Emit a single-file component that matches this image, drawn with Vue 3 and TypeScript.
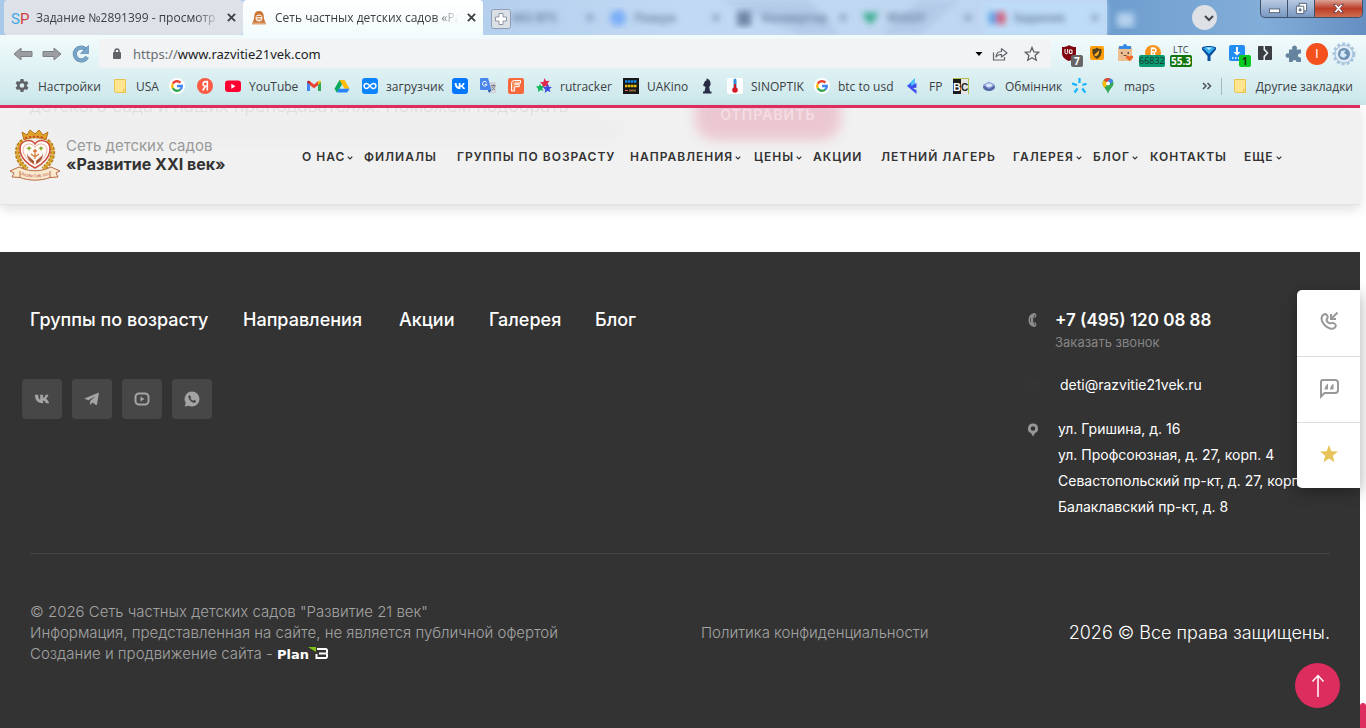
<script setup lang="ts">
interface Item { icon: string; label?: string; title?: string }
interface NavItem { label: string; sub?: boolean }

const google = '<circle cx="8" cy="8" r="8" fill="#fff"/><g fill="none" stroke-width="2.4"><path d="M11.4 4.6A4.8 4.8 0 0 0 3.8 5.7" stroke="#ea4335"/><path d="M3.8 5.7A4.8 4.8 0 0 0 3.8 10.3" stroke="#fbbc05"/><path d="M3.8 10.3A4.8 4.8 0 0 0 11.3 11.5" stroke="#34a853"/><path d="M11.3 11.5A4.7 4.7 0 0 0 12.8 8H8" stroke="#4285f4"/></g>'
const folder = '<path d="M2.5 1.5h11v13h-9a2 2 0 0 1-2-2z" fill="#ffe58f" stroke="#e9c34c"/><path d="M11.5 14.5v-3h2" fill="none" stroke="#e9c34c"/>'

const icons: Record<string, string> = {
  gear: '<path fill="#5f6368" d="M6.600 1h2.800l.4 2 1.300.7 1.900-.7 1.400 2.400-1.500 1.300v1.500l1.500 1.300-1.400 2.400-1.900-.7-1.300.8-.4 2H6.600l-.4-2-1.300-.8-1.900.7-1.400-2.400 1.500-1.300V6.700L1.600 5.400 3 3l1.900.7L6.200 3z"/><circle cx="8" cy="7.500" r="2.300" fill="#d8edf0"/>',
  folder,
  google,
  yandex: '<circle cx="8" cy="8" r="8" fill="#fc5b45"/><path d="M10.300 12.500V3.600H8.700c-3.300 0-3.600 4.500-.2 4.700h1.800M8.400 8.300l-2.700 4.200" fill="none" stroke="#fff" stroke-width="1.600"/>',
  youtube: '<rect y="2.500" width="16" height="11.500" rx="3" fill="#ff0033"/><path d="M6.300 5.700v5l4.200-2.500z" fill="#fff"/>',
  gmail: '<path d="M1 3.500V13h3V6.500" fill="#4285f4"/><path d="M12 6.500V13h3V3.500" fill="#34a853"/><path d="M1 4.200 4 6.800V3.300C2.500 2 1 3 1 4.200z" fill="#c5221f"/><path d="M4 3.300 8 6.400l4-3.100v3.900l-4 3-4-3z" fill="#ea4335"/><path d="M12 3.300c1.500-1.300 3-.3 3 .9l-3 2.600z" fill="#fbbc04"/>',
  drive: '<path d="M5.500 2h5L5 11.400 2.700 14.500.5 10.700z" fill="#0da960"/><path d="M5.500 2h5l5 8.700h-5z" fill="#ffba00"/><path d="M5 10.700h10.500l-2.200 3.800H2.700z" fill="#2684fc"/>',
  loop: '<rect width="16" height="16" rx="3" fill="#0a84ff"/><path d="M8 8C6.500 6 5.600 5.500 4.600 5.500a2.500 2.500 0 0 0 0 5C6.500 10.500 9 5.500 11.400 5.500a2.500 2.500 0 0 1 0 5C10.400 10.500 9.500 10 8 8z" fill="none" stroke="#fff" stroke-width="1.500"/>',
  vk: '<rect width="16" height="16" rx="3" fill="#07f"/><path d="M2.600 5h1.900c.1 2.600 1.300 3.700 2.200 3.900V5h1.800v2.400c1-.1 2-1.100 2.400-2.400h1.800c-.3 1.500-1.400 2.500-2.200 3 .8.400 2.100 1.300 2.600 3h-2c-.4-1.200-1.300-2-2.600-2.200V11h-.3C4.700 11 2.700 9 2.600 5z" fill="#fff"/>',
  translate: '<path d="M6 4h10v11H9z" fill="#d3d5d8"/><path d="M1 0h7l3.500 12H1a1 1 0 0 1-1-1V1a1 1 0 0 1 1-1z" fill="#4b86ed"/><path d="M8 12h3.500L9 15z" fill="#2453b3"/><path d="M6.700 4.500A2.300 2.300 0 1 0 7 6.400H4.800" fill="none" stroke="#fff"/><path d="M11 7.500h4.500M13.400 6.500v1M14.600 8c-.5 2-1.300 3-2.600 4M12 8.500c.6 1.500 1.500 2.500 2.800 3.200" fill="none" stroke="#70757c" stroke-width=".9"/>',
  ef: '<rect width="16" height="16" rx="2" fill="#f5693c"/><path d="M3.500 13V5.500c0-2 1-3 3-3h6v2.700H7.500c-.6 0-.9.300-.9 1h4.600v2.500H6.600V13z" fill="#ff8d5e" stroke="#fff"/>',
  rut: '<path d="M8.500 0 10 3l3.500-.3L11.600 5.600 13 9 9.400 8 6.500 10 6.400 6.400 4 4h3.400z" fill="#e0284f"/><path d="M4 5.500 5 8l3-.2-1.800 2.400L7.500 13 4.600 12 2 14l.1-3.300L0 8.500l3-.4z" fill="#12b95c"/><path d="M12 6l.8 2.700 3.200.3-2.500 2 1 3.300-2.800-1.500L8.700 15l.6-3.300L7 9.300l3.300-.5z" fill="#3d4ee0"/>',
  ua: '<rect width="16" height="16" fill="#171717"/><path d="M2 3.500h12" stroke="#1688e8" stroke-width="2.500" stroke-dasharray="2.500 .5"/><path d="M2 8h12" stroke="#e7bd12" stroke-width="2.500" stroke-dasharray="2.500 .5"/><path d="M2 12.500h3" stroke="#f66"/><path d="M6 12.500h7" stroke="#8b6333" stroke-width="2"/>',
  knight: '<path d="M4 15.500v-2h1.500L6.500 9 4 7.500 6 3l1.500-.5V.5C10.500 1 12 4 11.500 7l-1.300 2 .8 4.500h1.500v2z" fill="#292c45"/>',
  thermo: '<rect width="16" height="16" rx="2" fill="#fff"/><path d="M6.500 2a1.500 1.500 0 0 1 3 0v8h-3z" fill="#3390dc"/><path d="M7 6h2v5H7z" fill="#c71c23"/><circle cx="8" cy="12" r="2.800" fill="#d31b22"/>',
  fp: '<path d="M10 0v5L5.500 9.500 2 8z" fill="#30b7fa"/><path d="M2 8l4-3v2.500l5.500-2.500v4.500L8 10.500l3.500 1.500v4z" fill="#4051ed"/><path d="M10 1v4L6.500 8V4.500z" fill="#54c4ff"/>',
  bc: '<rect width="16" height="16" fill="#b4bf44"/><path d="M0 1h8v15H0z" fill="#1c1c1c"/><path d="M8 1h7v15H8z" fill="#e5e5e5"/><text x="0" y="13" fill="#fff" font-family="Liberation Sans" font-weight="700" font-size="11">B</text><text x="8" y="13" fill="#222" font-family="Liberation Sans" font-weight="700" font-size="10">C</text>',
  gem: '<ellipse cx="8" cy="9" rx="6" ry="4" fill="#5266a6"/><path d="M2 7 8 3.500 14 7l-6 4z" fill="#91a6d9"/><ellipse cx="8" cy="7.200" rx="3" ry="1.700" fill="#dce7fb"/>',
  kyiv: '<g stroke="#15b4ff" stroke-width="2.200"><path d="M7.500 0v5M0 5.500l5 1.600M2.500 14.500l3-4.200M10.300 10.500l3 4.200M10.500 7l4-1.300"/></g>',
  maps: '<path d="M8 0a5.500 5.500 0 0 0-5.500 5.500C2.500 9 7 11 8 16c1-5 5.500-7 5.500-10.500A5.500 5.500 0 0 0 8 0z" fill="#34a853"/><path d="M3.800 2 8 5.500 4.500 10C2.500 7.500 1.800 4.500 3.800 2z" fill="#fbbc04"/><path d="M8 0C6 0 4.700.8 3.800 2l3 2.500L10.500.6C9.700.2 9 0 8 0z" fill="#ea4335"/><path d="M10.500.6 6.800 4.500l2.500 2.300 3.900-3.500A5.500 5.500 0 0 0 10.500.6z" fill="#4285f4"/><circle cx="8" cy="5.500" r="1.900" fill="#fff"/>',
}

const bookmarks: Item[] = [
  { icon: 'gear', label: 'Настройки' }, { icon: 'folder', label: 'USA' }, { icon: 'google', title: 'Google' }, { icon: 'yandex', title: 'Яндекс' },
  { icon: 'youtube', label: 'YouTube' }, { icon: 'gmail', title: 'Gmail' }, { icon: 'drive', title: 'Drive' }, { icon: 'loop', label: 'загрузчик' },
  { icon: 'vk', title: 'VK' }, { icon: 'translate', title: 'Translate' }, { icon: 'ef', title: 'F' }, { icon: 'rut', label: 'rutracker' },
  { icon: 'ua', label: 'UAKino' }, { icon: 'knight', title: 'Chess' }, { icon: 'thermo', label: 'SINOPTIK' }, { icon: 'google', label: 'btc to usd' },
  { icon: 'fp', label: 'FP' }, { icon: 'bc', title: 'BC' }, { icon: 'gem', label: 'Обмінник' }, { icon: 'kyiv', title: 'Kyivstar' }, { icon: 'maps', label: 'maps' },
]

const nav: NavItem[] = [
  { label: 'О нас', sub: true }, { label: 'Филиалы' }, { label: 'Группы по возрасту' }, { label: 'Направления', sub: true }, { label: 'Цены', sub: true },
  { label: 'Акции' }, { label: 'Летний лагерь' }, { label: 'Галерея', sub: true }, { label: 'Блог', sub: true }, { label: 'Контакты' }, { label: 'Еще', sub: true },
]
const footerNav = ['Группы по возрасту', 'Направления', 'Акции', 'Галерея', 'Блог']
const addresses = ['ул. Гришина, д. 16', 'ул. Профсоюзная, д. 27, корп. 4', 'Севастопольский пр-кт, д. 27, корп. 2', 'Балаклавский пр-кт, д. 8']
const socials: Item[] = [
  { title: 'ВКонтакте', icon: '<path d="M.5 3.500h3.200c.1 3.200 1.200 4.700 2.100 5V3.500h2.900v3.300c1-.1 2-1.500 2.500-3.300H14c-.3 1.800-1.500 3.200-2.400 3.900.9.500 2.500 2 3.200 4.600h-3.200c-.5-1.500-1.500-2.600-2.900-2.800V12H8.300C3.800 12 .6 9.200.5 3.500z" transform="translate(.4 .3)"/>' },
  { title: 'Telegram', icon: '<path d="M15 1.500 1 7.200c-.6.300-.5.700 0 .9l3.500 1.200L11.500 5 6.200 10l-.2 3.700c.4 0 .6-.2.9-.5l1.700-1.600 3.300 2.500c.5.300 1 .1 1.100-.5z"/>' },
  { title: 'YouTube', icon: '<rect x="1.500" y="2.500" width="13" height="11" rx="3.500" fill="none" stroke="#a4a4a4" stroke-width="2"/><path d="M6.500 5.500v5l4-2.500z"/>' },
  { title: 'WhatsApp', icon: '<path fill-rule="evenodd" d="M8 .5a7.500 7.500 0 0 1 0 15c-1.300 0-2.400-.3-3.400-.8L.8 15.500l1-3.500A7.500 7.500 0 0 1 8 .5zM5.600 4c-1 .5-1.500 1.500-1 2.900.8 2.400 2.800 4.300 5.100 4.800 1.300.2 2.400-.6 2.400-1.800l-2-1.100-1 1C7.900 9.300 7 8.400 6.400 7.200l.7-1z"/>' },
]
</script>

<template>
  <div class="window">
    <section class="browser">
      <svg class="glass" viewBox="0 0 1366 35" preserveAspectRatio="xMaxYMin slice" aria-hidden="true">
        <defs>
          <linearGradient id="sky"><stop offset="0" stop-color="#a9c9e9" /><stop offset=".35" stop-color="#b4cfed" /><stop offset=".5" stop-color="#c2d9f3" /><stop offset=".8" stop-color="#bfd5ef" /></linearGradient>
          <linearGradient id="deep"><stop offset="0" stop-color="#6d9dce" /><stop offset=".6" stop-color="#83add9" /><stop offset="1" stop-color="#658fc1" /></linearGradient>
          <filter id="soft"><feGaussianBlur stdDeviation="3" /></filter>
        </defs>
        <rect width="1366" height="35" fill="url(#sky)" />
        <path d="M720 0h90l30 35h-40zM880 35l40-35h40l-40 35z" fill="#a9c0e0" opacity=".5" filter="url(#soft)" />
        <rect x="1107" width="259" height="35" fill="url(#deep)" />
        <rect x="984" y="2" width="122" height="33" fill="#bedcf8" filter="url(#soft)" />
        <g filter="url(#soft)" font-family="Noto Sans" font-size="12" font-weight="700" fill="#6e86a5">
          <text x="512" y="22">003 BTC</text><text x="585" y="22">✕</text>
          <circle cx="618" cy="18" r="8" fill="#79adf8" /><text x="634" y="22">Пошук</text><text x="711" y="22">✕</text>
          <rect x="737" y="11" width="14" height="15" /><text x="762" y="22">Конвертер</text><text x="838" y="22">✕</text>
          <path d="m862 13 8 12 9-12z" fill="#2dab86" /><text x="887" y="22">READY</text><text x="963" y="22">✕</text>
          <path d="M989 12h8v12h-8z" fill="#559ee2" /><path d="M997 12h8v12h-8z" fill="#d95367" /><text x="1013" y="22">Задание</text><text x="1090" y="22">✕</text>
          <rect x="1117" y="13" width="17" height="14" fill="#b6d3ef" />
        </g>
      </svg>

      <div class="tabs">
        <div class="tab">
          <svg class="i16" viewBox="0 0 16 16" aria-hidden="true"><text x="-1" y="14" font-family="Roboto" font-size="15" fill="#43a7e3">S</text><text x="8" y="14" font-family="Roboto" font-size="15" fill="#d63c42">P</text></svg>
          <span class="tab-title">Задание №2891399 - просмотр задания</span>
          <button class="close" aria-label="Закрыть вкладку"><svg viewBox="0 0 10 10"><path d="m1 1 8 8M9 1 1 9" /></svg></button>
        </div>
        <div class="tab active">
          <svg class="i16" viewBox="0 0 16 16" aria-hidden="true"><path d="M3 9c0-5 1-8 5-8s5 3 5 8l2 5-4-1H5l-4 1z" fill="#cc7436" /><circle cx="8" cy="8" r="3.500" fill="#f5e6d8" /><path d="M5.500 6.500h5M6 9h4" stroke="#cc7436" /><path d="M1 12.500h14v2H1z" fill="#dda67b" /></svg>
          <span class="tab-title">Сеть частных детских садов «Развитие</span>
          <button class="close" aria-label="Закрыть вкладку"><svg viewBox="0 0 10 10"><path d="m1 1 8 8M9 1 1 9" /></svg></button>
        </div>
        <button class="new-tab" aria-label="Новая вкладка"><svg viewBox="0 0 20 20"><rect x=".5" y=".5" width="19" height="19" rx="2" fill="#dbe0e7" stroke="#8e9db2" /><path d="M8 4.500h4V8h3.500v4H12v3.500H8V12H4.500V8H8z" fill="#fff" stroke="#9197a0" /></svg></button>
        <button class="tab-search" aria-label="Поиск вкладок"><svg viewBox="0 0 24 24"><path d="m8 10 4 4 4-4" fill="none" stroke="#45484c" stroke-width="2" /></svg></button>
        <div class="controls">
          <button aria-label="Свернуть"><svg viewBox="0 0 14 14"><rect x="1.500" y="7.500" width="11" height="4" fill="#fff" stroke="#526078" /></svg></button>
          <button aria-label="Развернуть"><svg viewBox="0 0 14 14"><g fill="#fff" stroke="#526078"><path d="M4.500 1.500h8v8h-8z" /><path d="M1.500 4.500h8v8h-8z" /><path d="M4.500 7.500h2v2h-2z" fill="#8eaad0" /></g></svg></button>
          <button class="shut" aria-label="Закрыть"><svg viewBox="0 0 14 14"><path d="M1.500 2.500h3L7 5l2.500-2.500h3L8.700 7l3.800 4.500h-3L7 9l-2.500 2.500h-3L5.300 7z" fill="#fff" stroke="#693b47" /></svg></button>
        </div>
      </div>

      <div class="toolbar">
        <button class="tool" aria-label="Назад"><svg viewBox="0 0 20 16"><path d="M1 8 8 2v3.500h11v5H8V14z" fill="#9b9da0" stroke="#7e8082" /></svg></button>
        <button class="tool" aria-label="Вперед"><svg viewBox="0 0 20 16"><path d="m19 8-7-6v3.500H1v5h11V14z" fill="#9b9da0" stroke="#7e8082" /></svg></button>
        <button class="tool reload" aria-label="Обновить"><svg viewBox="0 0 18 18"><path d="M14 4.500A6.500 6.500 0 1 0 15 12" fill="none" stroke="#5581a4" stroke-width="4" /><path d="M14 4.500A6.500 6.500 0 1 0 15 12" fill="none" stroke="#78a6cb" stroke-width="3" /><path d="M16.500.5v8h-8z" fill="#78a6cb" stroke="#5581a4" stroke-width=".6" /></svg></button>
        <div class="address">
          <svg class="lock" viewBox="0 0 10 14" aria-hidden="true"><rect x="1" y="5" width="8" height="7" rx="1" fill="#5f6368" /><path d="M3 5.500V4a2 2 0 0 1 4 0v1.500" fill="none" stroke="#5f6368" stroke-width="1.500" /></svg>
          <a class="url" href="https://www.razvitie21vek.com">https://<b>www.razvitie21vek.com</b></a>
          <svg class="drop" viewBox="0 0 8 8" aria-hidden="true"><path d="M.5 2h7L4 6z" /></svg>
          <svg class="i16" viewBox="0 0 16 16" aria-hidden="true"><g fill="none" stroke="#5f6368" stroke-width="1.200"><path d="M1.500 6.500v7.500h11v-3" /><path d="M4 11c.3-4 2.200-5.500 5.500-5.500V2.600L15 7 9.500 11V8.400C7 8.400 5.500 9 4 11z" stroke-linejoin="round" /></g></svg>
          <svg class="i16 star" viewBox="0 0 16 16" aria-hidden="true"><path d="m8 1.500 1.900 4.400 4.800.4-3.600 3.200 1.100 4.700L8 11.700l-4.200 2.500 1.100-4.700L1.300 6.300l4.800-.4z" fill="none" stroke="#5f6368" stroke-width="1.300" /></svg>
        </div>
        <div class="extensions">
          <span class="ext"><svg viewBox="0 0 16 16"><path d="M8 0c2 1.500 4 2 7 2v6c0 4-3 6.500-7 8-4-1.500-7-4-7-8V2c3 0 5-.5 7-2z" fill="#800610" /><path d="M4 4v3.500a1.300 1.300 0 0 0 2.600 0V4m1.800 4.500V5H11v3.500z" fill="none" stroke="#fff" /></svg><i class="badge gray">7</i></span>
          <span class="ext"><svg viewBox="0 0 16 16"><rect x="1" y="1" width="14" height="14" rx="2" fill="#ff9d0b" /><path d="M3.500 4c2 0 3.500-.5 4.500-1.500C9 3.500 10.500 4 12.500 4c.5 5-1 8-4.500 10-3.500-2-5-5-4.500-10z" fill="#51401d" /><path d="m5 10 5.500-5-1 4.500-2.500 2z" fill="#ffae27" /></svg></span>
          <span class="ext"><svg viewBox="0 0 16 16"><rect x="1" y="2" width="14" height="14" rx="1" fill="#eebf91" /><path d="M2 1h4a2 2 0 0 1 4 0h4v3H2z" fill="#348be4" /><path d="M4 7h1.500v2H4zM10.500 7H12v2h-1.500z" fill="#5e4c43" /><path d="M6.500 10.500h3" stroke="#5e4c43" /><path d="m9 11 2-.5 1.500 1 1.500-1 2 .5v2l-3.500 3L9 13z" fill="#ee672a" /></svg></span>
          <span class="ext"><svg viewBox="0 0 16 16"><circle cx="8" cy="8" r="8" fill="#f7931a" /><path d="M6.500 3.500h2.700a1.700 1.700 0 0 1 0 3.500H6.500zM6.500 7h3v3h-3z" fill="none" stroke="#fff" stroke-width="1.500" /><path d="M7 2v2M9 2v2" stroke="#fff" /></svg><i class="badge teal">66832</i></span>
          <span class="ext ltc">LTC<i class="badge dark">55.3</i></span>
          <span class="ext"><svg viewBox="0 0 16 16"><path d="M1 2.500c3-2 11-2 14 0v2L9.500 11v5h-3v-5L1 4.500z" fill="#0a4f9f" /><path d="M2 3c3-1.500 9-1.500 12 0L8 9z" fill="#35aef0" /><path d="M5 2.500h6L8 5z" fill="#bde9ff" /></svg></span>
          <span class="ext"><svg viewBox="0 0 16 16"><rect width="16" height="16" rx="2" fill="#238df2" /><path d="M7 2h2v5h2.500L8 10.500 4.500 7H7z" fill="#fff" /><path d="M3 13h10" stroke="#fff" stroke-width="1.500" stroke-dasharray="1.500 1.500" /></svg><i class="badge green">1</i></span>
          <span class="ext"><svg viewBox="0 0 16 16"><rect x="1" y="1" width="14" height="14" rx="1" fill="#3b3e42" /><path d="M6.500 1h1.500v3l3.500 4L8 12v3H6.500v-4l3-3-3-3z" fill="#e8f3f5" /></svg></span>
          <span class="ext puzzle"><svg viewBox="0 0 18 18"><path d="M4 4.500h3.500a2.500 2.500 0 1 1 4 0H16v4h-1a2 2 0 1 0 0 4h1V17h-4.500a2 2 0 1 0-4 0H4v-4.500a2.300 2.300 0 1 1 0-4z" fill="#63839f" /></svg></span>
          <button class="avatar" aria-label="Профиль">I</button>
          <button class="menu" aria-label="Меню"><svg viewBox="0 0 24 24"><circle cx="12" cy="12" r="10" fill="none" stroke="#a9c6df" stroke-width="3" stroke-dasharray="3 2" /><circle cx="12" cy="12" r="9" fill="#dfecf8" stroke="#a0bdd6" /><circle cx="12" cy="12" r="6" fill="#6c90b2" /><path d="m8 14 1-5 5-1-2 3 3 2-3 3z" fill="#d8eafa" /></svg></button>
        </div>
      </div>

      <nav class="bookmarks" aria-label="Закладки">
        <div class="marks">
          <a v-for="b in bookmarks" :key="b.icon + b.label" href="#" :aria-label="b.label ?? b.title"><svg class="i16" viewBox="0 0 16 16" v-html="icons[b.icon]"></svg><span v-if="b.label">{{ b.label }}</span></a>
        </div>
        <button class="more" aria-label="Другие"><svg viewBox="0 0 10 8"><path d="m1 1 3 3-3 3M5.500 1l3 3-3 3" /></svg></button>
        <a class="other" href="#"><svg class="i16" viewBox="0 0 16 16" v-html="folder"></svg><span>Другие закладки</span></a>
      </nav>
    </section>

    <div class="viewport">
      <main class="page">
        <header class="site-header">
          <div class="behind" aria-hidden="true">
            <p>детского сада и наших преподавателях. Поможем подобрать</p>
            <span class="ghost">Отправить</span>
          </div>
          <a class="brand" href="#">
            <svg viewBox="0 0 52 52" aria-hidden="true">
              <g fill="none" stroke="#b9811b" stroke-width="5" stroke-dasharray="3 1"><path d="M14 12C5 19 7 32 18 40" /><path d="M38 12c9 7 7 20-4 28" /></g>
              <g fill="none" stroke="#dba42b" stroke-width="2"><path d="M14 12C5 19 7 32 18 40" /><path d="M38 12c9 7 7 20-4 28" /></g>
              <path d="M26 39C18 35 11 28 11 20c0-9 11-11 15-5 4-6 15-4 15 5 0 8-7 15-15 19z" fill="#fff" stroke="#cf4b39" stroke-width="1.500" />
              <path d="M26 35.500c-6-3-12-8-12-15 0-6 9-8 12-2 3-6 12-4 12 2 0 7-6 12-12 15z" fill="#fffaf5" stroke="#e99a8b" stroke-width=".8" />
              <path d="M18 24c1 4 3 4 7 8v3c-4-2-7-5-7-11zm16 0c-1 4-3 4-7 8v3c4-2 7-5 7-11z" fill="#a85a36" />
              <circle cx="26" cy="22" r="1.800" fill="#d77536" /><path d="M26 24v6m-4-5 4 3 4-3" stroke="#d77536" stroke-width="1.200" fill="none" /><path d="m20 17 1 1.500 2 .5-2 1-1 2-1-2-2-1 2-.5zm12 0 1 1.500 2 .5-2 1-1 2-1-2-2-1 2-.5z" fill="#88ac28" />
              <path d="M15 11 13 3l5 3 3-5 5 4 4-4 4 5 5-3-2 8c-7-3-15-3-22 0z" fill="#dfa329" stroke="#b8711f" /><path d="M16 9c7-2 13-2 20 0" stroke="#c63925" stroke-width="1.500" fill="none" stroke-dasharray="2 2" />
              <path d="M10 38c10 5 22 5 32 0l9 4-4 2 2 4-8 .5c-9 3.500-21 3.500-30 0L3 48l2-4-4-2z" fill="#f9e9cf" stroke="#b96c43" /><path d="M11 42v6m30-6v6" stroke="#b96c43" />
              <path id="ribbon" d="M12 46q14 5 28 0" fill="none" /><text font-family="Liberation Sans" font-size="4" fill="#bd5139"><textPath href="#ribbon">РАЗВИТИЕ XXI</textPath></text>
            </svg>
            <span class="brand-text">Сеть детских садов<strong>«Развитие XXI век»</strong></span>
          </a>
          <nav class="main-nav">
            <a v-for="n in nav" :key="n.label" href="#">{{ n.label }}<svg v-if="n.sub" viewBox="0 0 6 4" aria-hidden="true"><path d="m.7.7 2.300 2.300L5.300.7" /></svg></a>
          </nav>
        </header>

        <footer class="footer">
          <div class="footer-top">
            <div>
              <nav class="footer-nav"><a v-for="n in footerNav" :key="n" href="#">{{ n }}</a></nav>
              <div class="socials"><a v-for="s in socials" :key="s.title" href="#" :aria-label="s.title"><svg viewBox="0 0 16 16" v-html="s.icon"></svg></a></div>
            </div>
            <address class="contacts">
              <svg viewBox="0 0 10 14" aria-hidden="true"><path d="M8.500 1.800A3 3 0 0 0 4.500.5C-.8 2-.8 12 4.500 13.500a3 3 0 0 0 4-1.300L7.800 9.500H5.200v-5h2.600z" fill="#8c8c8c" /><path d="M6.500 2v2M6.500 10v2M2.500 5v4" stroke="#555" /></svg>
              <div class="phone"><a href="tel:+74951200888">+7 (495) 120 08 88</a><button>Заказать звонок</button></div>
              <svg viewBox="0 0 12 12" aria-hidden="true"><path d="M1 2h10v9H1zM1 2l5 4 5-4" fill="none" stroke="#3b3838" /></svg>
              <a class="mail" href="mailto:deti@razvitie21vek.ru">deti@razvitie21vek.ru</a>
              <svg viewBox="0 0 10 14" aria-hidden="true"><path d="M5 .5a5 5 0 0 0-2 9.600L5 13.500l2-3.400A5 5 0 0 0 5 .5zm0 2.700a2.300 2.300 0 1 1 0 4.600 2.300 2.300 0 0 1 0-4.600z" fill="#999" fill-rule="evenodd" /></svg>
              <ul><li v-for="a in addresses" :key="a">{{ a }}</li></ul>
            </address>
          </div>
          <div class="footer-bottom">
            <p class="legal">© 2026 Сеть частных детских садов "Развитие 21 век"<br>Информация, представленная на сайте, не является публичной офертой<br>Создание и продвижение сайта -
              <a href="#" aria-label="Plan B"><svg viewBox="0 0 52 12"><text x="0" y="12" font-family="DejaVu Sans" font-weight="700" font-size="13" fill="#fff">Plan</text><path d="M31 0h8v5z" fill="#83bd17" /><path d="M40 2h9l1 1v2.500l-1 1 1 1V10l-1 1h-9.500V7M42 6.500h6" fill="none" stroke="#fff" stroke-width="2" /></svg></a></p>
            <a class="privacy" href="#">Политика конфиденциальности</a>
            <p class="rights">2026 © Все права защищены.</p>
          </div>
        </footer>

        <aside class="side">
          <button aria-label="Заказать звонок"><svg viewBox="0 0 20 20"><path d="M5.300 3.300c-4 1.600-3.300 7 0 10.500s8.300 5.700 11 2.300c1.300-2-.2-3.600-2.500-4.200-1.400-.3-1.900.8-2.900.5C9 11.800 7.500 10 7.500 8.600c.1-1 1.300-1 1.200-2.400-.2-1.900-1.600-3.600-3.400-2.900zM18.500 1.500 12 8M12 3v5h5" /></svg></button>
          <button aria-label="Сообщение"><svg viewBox="0 0 20 20"><path d="M4 2h12a3 3 0 0 1 3 3v7a3 3 0 0 1-3 3H5.500L2 18.500V4a2 2 0 0 1 2-2z" /><path d="M9 5.500v6H5.500C5.500 9 7 7 9 5.500zM14.500 5.500v6H11c0-2.500 1.500-4.500 3.500-6z" fill="#999" stroke="none" /></svg></button>
          <button aria-label="Отзывы"><svg viewBox="0 0 20 20"><path d="m10 1 2.300 6.200 6.700.3-5.200 4.200 1.700 6.500-5.500-3.700-5.500 3.700 1.700-6.500L1 7.500l6.700-.3z" fill="#e7c458" stroke="none" /></svg></button>
        </aside>
        <button class="up" aria-label="Наверх"><svg viewBox="0 0 14 24"><path d="M7 23V2M1.500 7.500 7 1.500l5.500 6" /></svg></button>
      </main>
      <div class="scroll"><span></span></div>
    </div>
  </div>
</template>

<style>
body { margin: 0; }
</style>

<style scoped>
* { box-sizing: border-box; }
button { border: 0; padding: 0; background: none; font: inherit; color: inherit; display: flex; align-items: center; justify-content: center; }
a { color: inherit; text-decoration: none; }
svg { display: block; flex: none; overflow: visible; }
p, ul { margin: 0; padding: 0; list-style: none; }
.i16 { width: 16px; height: 16px; }
.window { min-height: 100vh; display: flex; flex-direction: column; font-family: Inter, sans-serif; background: #fff; }

.browser { position: relative; overflow: hidden; font-family: "Open Sans", sans-serif; font-size: 12px; color: #3c4043; background: linear-gradient(#f2fbfc 35px, #cbe7eb 105px); }
.glass { position: absolute; top: 0; left: 0; width: 100%; height: 35px; overflow: hidden; }
.tabs { position: relative; display: flex; align-items: center; height: 35px; padding-left: 4px; }
.tab { width: 239px; height: 35px; display: flex; align-items: center; padding: 0 7px 0 8px; background: #dde1e8; border-radius: 4px; }
.tab.active { width: 240px; background: linear-gradient(#fff, #f2fbfc); border-radius: 4px 4px 0 0; }
.tab-title { flex: 1; min-width: 0; margin-left: 8px; white-space: nowrap; overflow: hidden; mask-image: linear-gradient(to right, #000 160px, transparent 184px); }
.close { width: 10px; height: 10px; margin-left: 8px; }
.close svg { width: 9px; height: 9px; fill: none; stroke: #3b3e42; stroke-width: 2; }
.new-tab { margin-left: 8px; padding-top: 3px; }
.new-tab svg { width: 20px; height: 20px; }
.tab-search { width: 25px; height: 25px; margin-left: auto; border-radius: 50%; background: #dde1e6; }
.tab-search svg { width: 24px; height: 24px; margin-left: 8px; }
.controls { display: flex; align-self: flex-start; height: 18px; margin: 0 3px 0 43px; border: 1px solid #40516a; border-top: 0; border-radius: 0 0 5px 5px; overflow: hidden; background: linear-gradient(#b8cae2, #7998c1); }
.controls button { width: 27px; border-right: 1px solid #40516a; }
.controls .shut { width: 47px; border: 0; background: linear-gradient(#dba294, #bc3e27 50%, #ce6d50); }
.controls svg { width: 13px; height: 13px; }

.toolbar { position: relative; display: flex; align-items: center; height: 37px; padding-left: 13px; }
.tool { width: 20px; margin-right: 9px; }
.tool svg { width: 20px; height: 16px; }
.reload { margin-right: 8px; }
.reload svg { width: 18px; height: 18px; }
.address { flex: 1; display: flex; align-items: center; height: 29px; padding: 0 11px 0 13px; border-radius: 3px; background: #f1f3f5; }
.lock { width: 10px; height: 14px; }
.url { margin-left: 11px; font: 13px "Noto Sans", sans-serif; color: #6a6d71; }
.url b { font-weight: 400; color: #202124; }
.drop { width: 8px; height: 8px; margin: 0 9px 0 auto; }
.star { margin-left: 16px; }
.extensions { display: flex; align-items: center; gap: 12px; margin: 0 10px; }
.ext { position: relative; width: 16px; height: 18px; color: #3c4043; }
.ext svg { width: 16px; height: 16px; }
.ltc { font-size: 9px; line-height: 9px; }
.puzzle svg { width: 18px; height: 18px; }
.badge { position: absolute; top: 10px; left: 10px; padding: 0 3px; border-radius: 2px; font: 700 10px/12px "Open Sans", sans-serif; color: #fff; }
.gray { background: #666; }
.teal { left: -6px; padding: 0; background: #0b9b73; color: #17372e; font-size: 9px; font-weight: 500; }
.dark { left: -3px; padding: 0 1px; background: #12750d; }
.green { background: #0ac922; color: #173217; }
.avatar { width: 22px; height: 22px; margin: 0 -8px 0 -7px; border-radius: 50%; background: #f4511e; color: #fff; font-family: Roboto, sans-serif; }
.menu svg { width: 24px; height: 24px; }

.bookmarks { position: relative; display: flex; align-items: center; height: 33px; padding: 0 13px 5px 14px; white-space: nowrap; }
.marks { flex: 1; display: grid; grid-template-columns: 98px 57px 28px 28px 81px 28px 28px 90px 28px 28px 28px 87px 76px 28px 87px 91px 48px 28px 91px 28px 60px; }
.marks a, .other { display: flex; align-items: center; gap: 8px; }
.more svg { width: 10px; height: 8px; fill: none; stroke: #4d5358; stroke-width: 1.500; }
.other { margin-left: 9px; padding-left: 10px; border-left: 1px solid #a5babf; }

.viewport { flex: 1; display: flex; }
.page { position: relative; flex: 1; min-width: 0; display: flex; flex-direction: column; color: #333; }
.scroll { width: 6px; display: flex; align-items: flex-end; }
.scroll span { width: 6px; height: 25px; border-radius: 3px 3px 0 0; background: #dc2d5e; }

.site-header { position: relative; display: flex; align-items: center; height: 100px; padding: 0 9px 2px; border-top: 3px solid #dc2d5e; border-bottom: 1px solid #e2e2e2; background: #f1f1f1; box-shadow: 0 4px 12px #0002; }
.behind { position: absolute; inset: 0; overflow: hidden; isolation: isolate; }
.behind p { margin: -14px 0 0 30px; font-size: 18px; line-height: 24px; font-weight: 300; color: #dedede; white-space: nowrap; }
.behind::before { content: ""; position: absolute; z-index: -1; top: 14px; left: 30px; width: 590px; height: 16px; background: #ededed; filter: blur(6px); }
.ghost { position: absolute; top: -20px; left: 695px; width: 146px; height: 52px; display: flex; align-items: center; justify-content: center; font-size: 14px; font-weight: 600; letter-spacing: 1px; text-transform: uppercase; color: #f4dce2; }
.ghost::before { content: ""; position: absolute; inset: -10px 0 0; z-index: -1; border-radius: 20px; background: #ebc8d1; filter: blur(6px); }
.brand { position: relative; display: flex; align-items: center; gap: 5px; width: 293px; }
.brand > svg { width: 52px; height: 52px; }
.brand-text { font-size: 15px; line-height: 18px; color: #999; white-space: nowrap; }
.brand-text strong { display: block; color: #333; font-size: 16px; font-weight: 700; }
.main-nav { position: relative; display: grid; grid-template-columns: 62px 93px 173px 124px 59px 68px 132px 80px 57px 94px 40px; padding-top: 3px; font-size: 12px; line-height: 16px; font-weight: 600; letter-spacing: 1px; text-transform: uppercase; white-space: nowrap; }
.main-nav a { display: flex; align-items: center; gap: 2px; }
.main-nav svg { width: 6px; height: 4px; margin-top: 2px; fill: none; stroke: #333; stroke-width: 1.200; }

.footer { flex: 1; margin-top: 47px; padding: 56px 30px 0; background: #333; color: #fff; }
.footer-top { display: flex; justify-content: space-between; height: 246px; border-bottom: 1px solid #474747; }
.footer-nav { display: grid; grid-template-columns: 213px 156px 90px 106px auto; font-size: 18px; line-height: 24px; font-weight: 500; }
.socials { display: flex; gap: 10px; margin: 47px 0 0 -8px; }
.socials a { width: 40px; height: 40px; display: flex; align-items: center; justify-content: center; border-radius: 4px; background: #474747; }
.socials svg { width: 16px; height: 16px; fill: #a4a4a4; }
.contacts { display: grid; grid-template-columns: 30px 272px; align-content: start; row-gap: 22px; font-style: normal; font-size: 14px; line-height: 22px; white-space: nowrap; }
.contacts > svg { width: 10px; height: 14px; margin-top: 5px; }
.phone { margin-left: -3px; }
.phone a { display: block; font-size: 17px; line-height: 24px; font-weight: 600; }
.phone button { font-size: 13px; line-height: 20px; color: #858585; }
.mail { margin-left: 2px; }
.contacts ul { line-height: 26px; margin-top: -2px; }
.footer-bottom { display: grid; grid-template-columns: 671px 1fr auto; align-items: center; padding-top: 47px; font-size: 15px; line-height: 21px; font-weight: 300; color: #a3a3a3; }
.legal a { display: inline-block; }
.legal a svg { width: 52px; height: 12px; }
.rights { font-size: 18px; color: #fff; }

.side { position: absolute; right: 0; top: 185px; width: 63px; border-radius: 5px 0 0 5px; background: #fff; box-shadow: 0 4px 16px #0005; }
.side button { width: 63px; height: 66px; padding-bottom: 4px; }
.side button + button { border-top: 1px solid #ddd; }
.side svg { width: 20px; height: 20px; fill: none; stroke: #999; stroke-width: 2; }
.up { position: absolute; right: 20px; bottom: 20px; width: 45px; height: 45px; border-radius: 50%; background: #dc2d5e; }
.up svg { width: 14px; height: 24px; fill: none; stroke: #fff; stroke-width: 1.500; }
</style>
